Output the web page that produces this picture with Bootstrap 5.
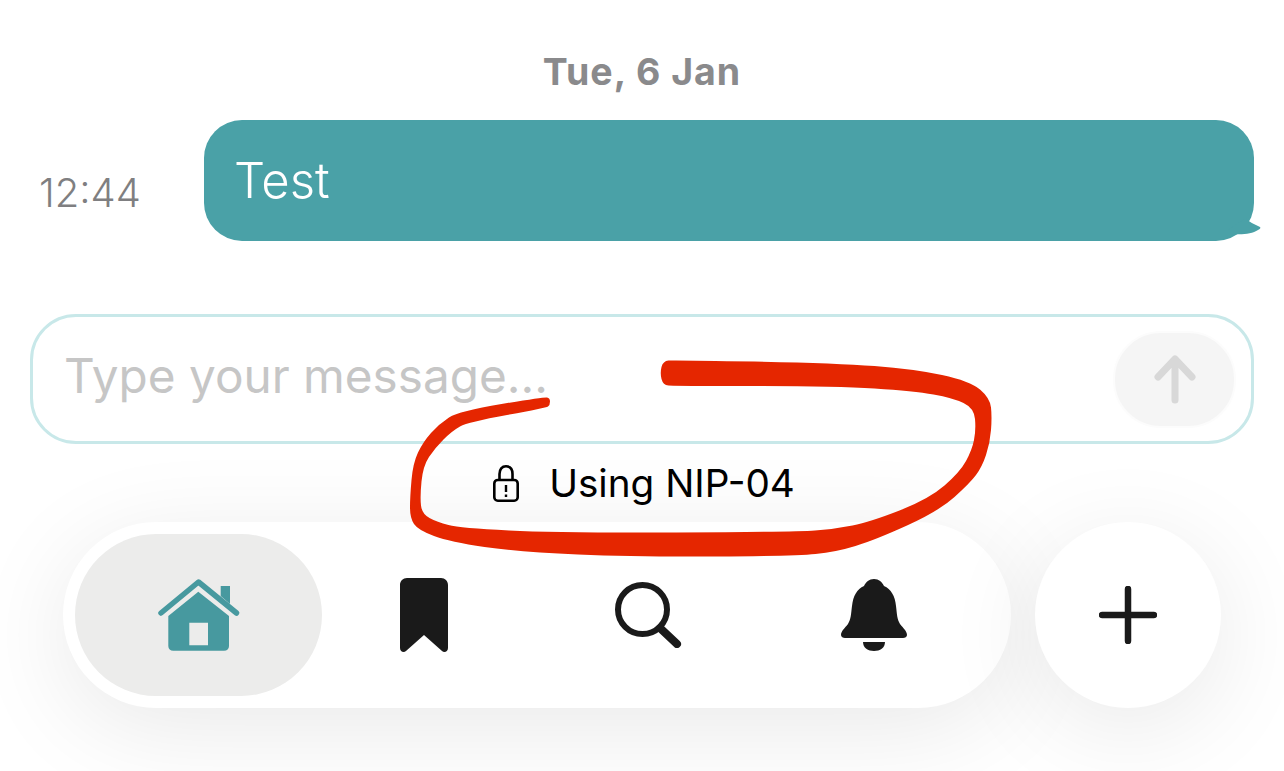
<!DOCTYPE html>
<html lang="en">
<head>
    <meta charset="UTF-8">
    <meta name="viewport" content="width=device-width, initial-scale=1.0">
    <title>Chat</title>
    <link href="https://cdn.jsdelivr.net/npm/bootstrap@5.3.0/dist/css/bootstrap.min.css" rel="stylesheet">
    <style>
        body {
            background-color: #ffffff;
            font-family: Inter, "Liberation Sans", sans-serif;
            overflow: hidden;
        }

        .chat-page {
            width: 1284px;
            height: 771px;
            padding-top: 50px;
            overflow: hidden;
            position: relative;
        }

        .day-label {
            height: 44px;
            line-height: 44px;
            font-size: 37.5px;
            font-weight: 700;
            letter-spacing: 1px;
            color: #8a8a8c;
            margin-bottom: 26px;
        }

        /* message row */
        .msg-row {
            height: 121px;
            padding: 0 30px 0 39px;
        }

        .msg-time {
            width: 165px;
            padding-top: 25px;
            font-size: 40px;
            font-weight: 300;
            color: #7f7f81;
        }

        .msg-bubble {
            position: relative;
            background-color: #4aa1a7;
            border-radius: 38px;
            color: #ffffff;
            font-size: 49px;
            font-weight: 300;
            padding-left: 30px;
        }

        .msg-tail {
            position: absolute;
            right: -8px;
            bottom: 3px;
        }

        /* composer */
        .composer {
            height: 130px;
            margin: 73px 30px 0 30px;
            padding: 0 15px 0 29px;
            border: 3px solid #c8e8e9;
            border-radius: 46px;
        }

        .composer-input {
            border: 0;
            outline: 0;
            background: transparent;
            font-size: 47.7px;
            font-weight: 400;
            min-width: 0;
            margin-top: -4px;
        }

        .composer-input::placeholder {
            color: #c6c6c6;
            opacity: 1;
        }

        .send-btn {
            width: 123px;
            height: 97px;
            padding: 0;
            border: 2px solid #fcfcfc;
            border-radius: 48px;
            background-color: #f5f5f5;
        }

        /* encryption note */
        .nip-note {
            height: 78px;
            gap: 30px;
            padding-left: 4px;
            font-size: 38.7px;
            font-weight: 400;
            color: #000000;
        }

        /* bottom navigation */
        .tab-row {
            padding: 0 63px;
            gap: 24px;
        }

        .tab-pill {
            width: 948px;
            height: 186px;
            padding: 12px 25px 12px 23px;
            background-color: #ffffff;
            border-radius: 93px;
            box-shadow: 0 20px 100px rgba(0, 0, 0, 0.09);
        }

        .tab-item {
            width: 225px;
            height: 162px;
        }

        .tab-item-active {
            width: 247px;
            margin: 0 -11px;
            background-color: #ececeb;
            border-radius: 81px;
        }

        .new-btn {
            width: 186px;
            height: 186px;
            background-color: #ffffff;
            border-radius: 50%;
            box-shadow: 0 20px 100px rgba(0, 0, 0, 0.09);
        }

        /* red marker drawn on top of the screenshot */
        .marker-layer {
            position: absolute;
            left: 0;
            top: 0;
            pointer-events: none;
        }
    </style>
</head>
<body>

<div class="chat-page">
    <div class="day-label text-center">Tue, 6 Jan</div>

    <div class="msg-row d-flex">
        <div class="msg-time d-flex align-items-center">12:44</div>
        <div class="msg-bubble flex-grow-1 d-flex align-items-center">
            Test
            <svg class="msg-tail" width="34" height="20" viewBox="0 0 34 20">
                <path d="M18 0 C20 4 27 6 32 9 C33 10 32 11 30 12 C24 16 14 17 4 16 L0 12 Z" fill="#4aa1a7"/>
            </svg>
        </div>
    </div>

    <div class="composer d-flex align-items-center">
        <input class="composer-input flex-grow-1" type="text" placeholder="Type your message...">
        <button class="send-btn d-flex align-items-center justify-content-center" type="button" aria-label="Send">
            <svg width="42" height="50" viewBox="0 0 42 50">
                <path d="M21 46 V5 M4 23 L21 5 L38 23" fill="none" stroke="#d8d8d8" stroke-width="7" stroke-linecap="round" stroke-linejoin="round"/>
            </svg>
        </button>
    </div>

    <div class="nip-note d-flex align-items-center justify-content-center">
        <svg width="26" height="37" viewBox="0 0 26 37">
            <path d="M6.5 15 V9 C6.500 4 9 1.300 13 1.300 C17 1.300 19.500 4 19.500 9 V15" fill="none" stroke="#000" stroke-width="2.600"/>
            <rect x="1.300" y="15" width="23.400" height="20.700" rx="3.500" fill="none" stroke="#000" stroke-width="2.600"/>
            <path d="M13 20 V27 M13 29.500 V32" stroke="#000" stroke-width="2.400"/>
        </svg>
        <span>Using NIP-04</span>
    </div>

    <div class="tab-row d-flex">
        <nav class="tab-pill d-flex align-items-center">
            <div class="tab-item tab-item-active d-flex align-items-center justify-content-center">
                <svg width="84" height="74" viewBox="0 0 84 74">
                    <path d="M4 35 L41.500 4 L79.500 35" fill="none" stroke="#47999f" stroke-width="5.500" stroke-linecap="round" stroke-linejoin="round"/>
                    <path d="M63.700 8 H73 V26 L63.700 18 Z" fill="#47999f"/>
                    <path d="M11.300 38 L41.300 13.700 L72 38 V68 C72 71 70 72.700 67 72.700 H16.300 C13.300 72.700 11.300 71 11.300 68 Z M32.300 44.700 V67.300 H51 V44.700 Z" fill="#47999f" fill-rule="evenodd"/>
                </svg>
            </div>
            <div class="tab-item d-flex align-items-center justify-content-center">
                <svg width="48" height="74" viewBox="0 0 48 74">
                    <path d="M7 0 H41 C45 0 48 3 48 7 V70 C48 74 44 75 42 73 L24 57 L6 73 C4 75 0 74 0 70 V7 C0 3 3 0 7 0 Z" fill="#1a1a1a"/>
                </svg>
            </div>
            <div class="tab-item d-flex align-items-center justify-content-center">
                <svg width="68" height="66" viewBox="0 0 68 66">
                    <circle cx="27.500" cy="27.500" r="24.500" fill="none" stroke="#1a1a1a" stroke-width="6"/>
                    <path d="M45 46 L62 62" stroke="#1a1a1a" stroke-width="8" stroke-linecap="round"/>
                </svg>
            </div>
            <div class="tab-item d-flex align-items-center justify-content-center">
                <svg width="66" height="72" viewBox="0 0 66 72">
                    <path d="M33 0 C38 0 41 3 43 7 C50 10 54 17 55 27 C56 35 56 40 59 45 C62 49 66 52 66 56 C66 58 64 59 62 59 L4 59 C2 59 0 58 0 56 C0 52 4 49 7 45 C10 40 10 35 11 27 C12 17 16 10 23 7 C25 3 28 0 33 0 Z" fill="#1a1a1a"/>
                    <path d="M22 63 H44 C44 69 39 72 33 72 C27 72 22 69 22 63 Z" fill="#1a1a1a"/>
                </svg>
            </div>
        </nav>
        <div class="new-btn d-flex align-items-center justify-content-center">
            <svg width="58" height="58" viewBox="0 0 58 58">
                <path d="M29 3 V55 M3 29 H55" stroke="#1a1a1a" stroke-width="6.500" stroke-linecap="round"/>
            </svg>
        </div>
    </div>

    <svg class="marker-layer" width="1284" height="771" viewBox="0 0 1284 771">
        <path id="marker" fill="#e52600"/>
    </svg>
</div>

<script>
    // outline of the hand drawn stroke, smoothed through the midpoints
    const pts = [[660,373],[663,361],[674,360],[835,363],[914,369],[970,381],[990,398],[992,417],[990,443],[982,467],[970,483],[939,511],[875,540],[836,552],[795,556],[637,557],[519,552],[450,542],[418,530],[410,518],[410,497],[413,463],[423,442],[439,424],[459,411],[544,397],[550,398],[550,405],[546,408],[468,422],[452,431],[435,448],[423,466],[420,497],[422,514],[437,522],[460,528],[558,533],[795,532],[835,529],[870,522],[929,499],[960,472],[972,450],[976,430],[974,408],[953,398],[914,391],[835,386],[674,386],[663,385]];
    const mid = (a, b) => [(a[0] + b[0]) / 2, (a[1] + b[1]) / 2];
    let start = mid(pts[pts.length - 1], pts[0]);
    let d = "M" + start.join(" ");
    pts.forEach((p, i) => {
        const m = mid(p, pts[(i + 1) % pts.length]);
        d += " Q" + p.join(" ") + " " + m.join(" ");
    });
    document.getElementById("marker").setAttribute("d", d + "Z");
</script>

<script src="https://cdn.jsdelivr.net/npm/bootstrap@5.3.0/dist/js/bootstrap.bundle.min.js"></script>
</body>
</html>
